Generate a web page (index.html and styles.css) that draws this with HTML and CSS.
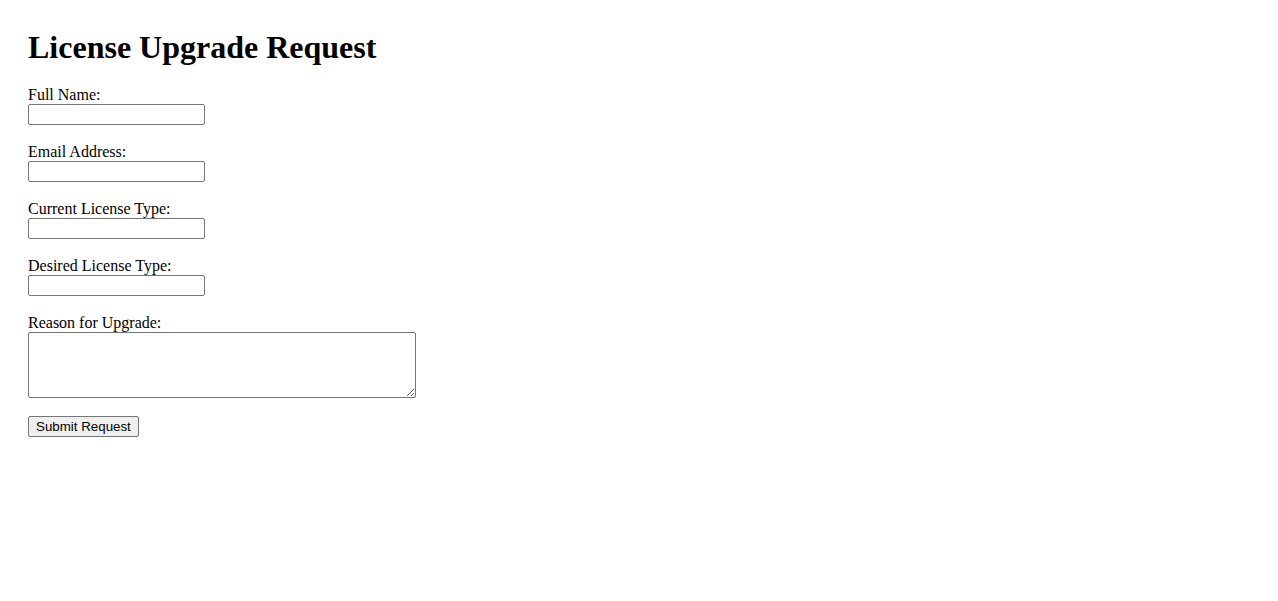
FILE: index.html
```html
<!DOCTYPE html>
<html lang="en">
<head>
    <meta charset="UTF-8">
    <meta name="viewport" content="width=device-width, initial-scale=1.0">
    <title>License Upgrade Request</title>
    <link rel="stylesheet" href="styles.css">
</head>
<body>
    <h1>License Upgrade Request</h1>

    <form class="upgrade-form" onsubmit="return false;">
        <div class="field">
            <label for="full-name">Full Name:</label>
            <input type="text" id="full-name" name="full-name">
        </div>

        <div class="field">
            <label for="email">Email Address:</label>
            <input type="email" id="email" name="email">
        </div>

        <div class="field">
            <label for="current-license">Current License Type:</label>
            <input type="text" id="current-license" name="current-license">
        </div>

        <div class="field">
            <label for="desired-license">Desired License Type:</label>
            <input type="text" id="desired-license" name="desired-license">
        </div>

        <div class="field field-area">
            <label for="reason">Reason for Upgrade:</label>
            <textarea id="reason" name="reason"></textarea>
        </div>

        <button type="submit">Submit Request</button>
    </form>
</body>
</html>
```

FILE: styles.css
```css
body {
    font-family: 'Liberation Serif', 'Times New Roman', serif;
    font-size: 16px;
    color: #000;
    background: #FFFFFF;
    margin: 0;
    padding: 29px 28px;
}

h1 {
    font-size: 32px;
    line-height: 37px;
    font-weight: bold;
    margin: 0 0 19px 0;
}

.field {
    margin-bottom: 17px;
}

.field-area {
    margin-bottom: 18px;
}

label {
    display: block;
    line-height: 18px;
    padding-top: 1px;
}

input, textarea {
    display: block;
    box-sizing: border-box;
    border: 1px solid #767676;
    border-radius: 2px;
    background-color: #FFFFFF;
    padding: 1px 2px;
    margin: 0;
}

input {
    width: 177px;
    height: 21px;
    font-family: 'Liberation Sans', Arial, sans-serif;
    font-size: 13.333px;
}

textarea {
    width: 388px;
    height: 66px;
    font-family: 'Liberation Mono', 'Courier New', monospace;
    font-size: 13.333px;
}

button {
    display: block;
    height: 21px;
    padding: 1px 7px;
    margin: 0;
    font-family: 'Liberation Sans', Arial, sans-serif;
    font-size: 13.333px;
    color: #000;
    background-color: #EFEFEF;
    border: 1px solid #767676;
    border-radius: 2px;
    cursor: pointer;
}

button:hover {
    background-color: #E5E5E5;
}
```
